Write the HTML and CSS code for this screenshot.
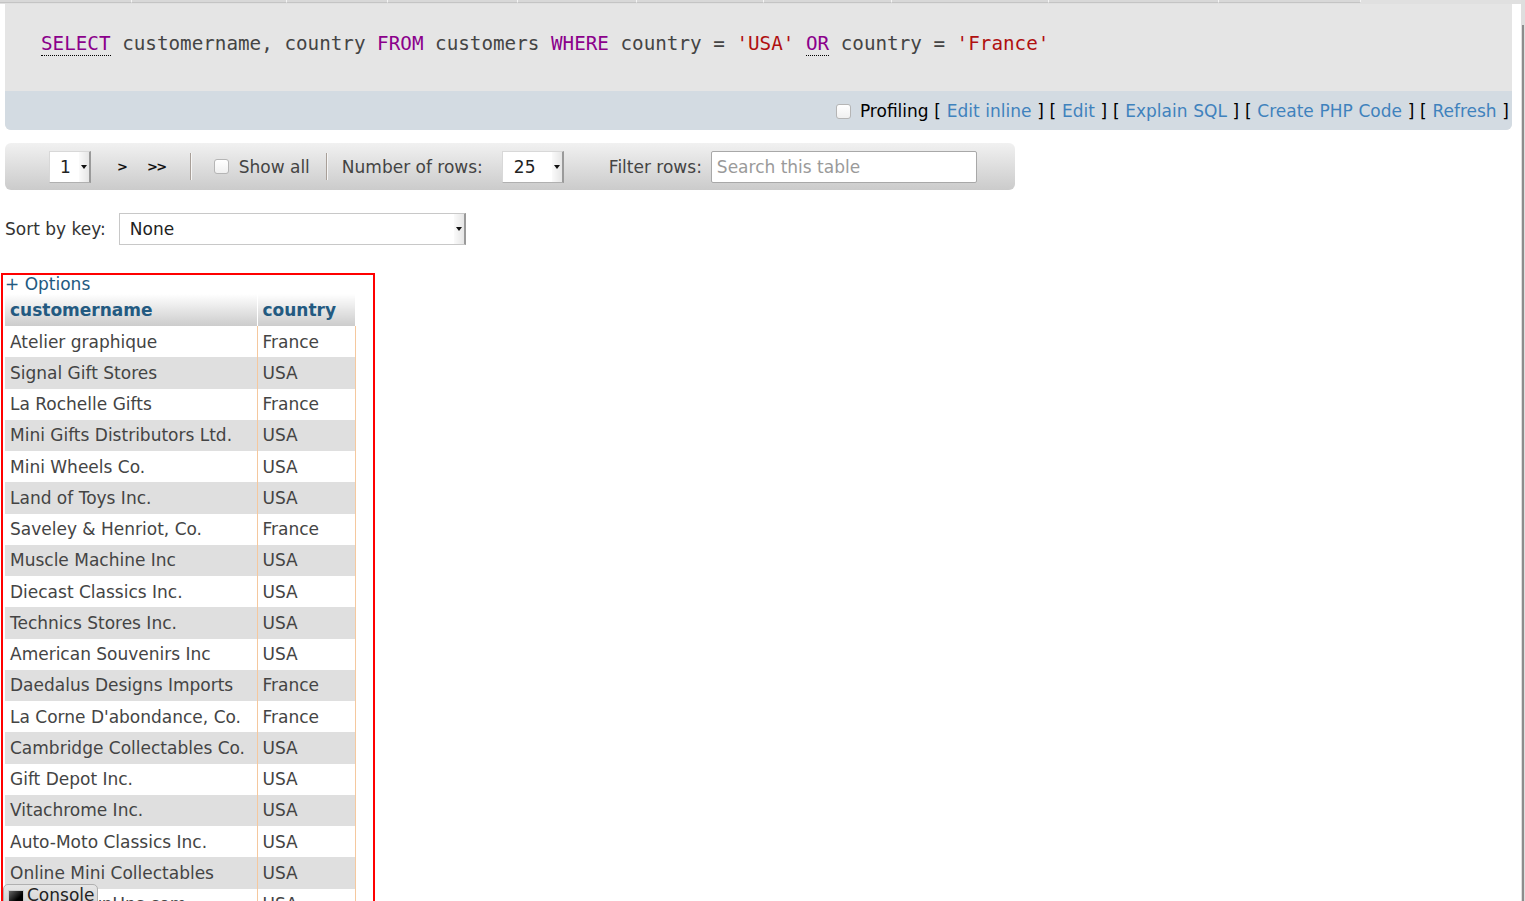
FILE: index.html
```html
<!DOCTYPE html>
<html>
<head>
<meta charset="utf-8">
<title>customers</title>
<link rel="stylesheet" href="styles.css">
</head>
<body>
<div class="tabs">
  <span class="tab t1"></span><span class="tab t2"></span><span class="tab t3"></span><span class="tab t4"></span><span class="tab t5"></span><span class="tab t6"></span><span class="tab t7"></span><span class="tab t8"></span><span class="tab t9"></span><span class="tab t10"></span>
</div>
<div class="scrollbar"><div class="thumb"></div></div>
<main class="page">
  <section class="sqlbox">
    <div class="sql"><code><abbr class="kw">SELECT</abbr> customername, country <span class="kw">FROM</span> customers <span class="kw">WHERE</span> country = <span class="str">'USA'</span> <abbr class="kw">OR</abbr> country = <span class="str">'France'</span></code></div>
    <div class="sqlactions">
      <span class="actions"><span class="cbox"></span>Profiling <span class="br">[</span> <a>Edit inline</a> <span class="br">]</span> <span class="br">[</span> <a>Edit</a> <span class="br">]</span> <span class="br">[</span> <a>Explain SQL</a> <span class="br">]</span> <span class="br">[</span> <a>Create PHP Code</a> <span class="br">]</span> <span class="br">[</span> <a>Refresh</a> <span class="br">]</span></span>
    </div>
  </section>

  <section class="navbar">
    <div class="sel sel-page"><span class="val">1</span><span class="arr"></span></div>
    <span class="navbtn next">&gt;</span>
    <span class="navbtn last">&gt;&gt;</span>
    <span class="sep sep1"></span>
    <label class="showall"><span class="cbox"></span>Show all</label>
    <span class="sep sep2"></span>
    <span class="lbl rows">Number of rows:</span>
    <div class="sel sel-rows"><span class="val">25</span><span class="arr"></span></div>
    <span class="lbl filter">Filter rows:</span>
    <div class="search">Search this table</div>
  </section>

  <section class="sortrow">
    <span class="lbl">Sort by key:</span>
    <div class="sel sel-sort"><span class="val">None</span><span class="arr"></span></div>
  </section>

  <section class="results">
    <a class="options">+ Options</a>
    <table class="data">
      <thead>
        <tr><th class="c1">customername</th><th class="c2">country</th></tr>
      </thead>
      <tbody>
        <tr><td>Atelier graphique</td><td>France</td></tr>
        <tr><td>Signal Gift Stores</td><td>USA</td></tr>
        <tr><td>La Rochelle Gifts</td><td>France</td></tr>
        <tr><td>Mini Gifts Distributors Ltd.</td><td>USA</td></tr>
        <tr><td>Mini Wheels Co.</td><td>USA</td></tr>
        <tr><td>Land of Toys Inc.</td><td>USA</td></tr>
        <tr><td>Saveley &amp; Henriot, Co.</td><td>France</td></tr>
        <tr><td>Muscle Machine Inc</td><td>USA</td></tr>
        <tr><td>Diecast Classics Inc.</td><td>USA</td></tr>
        <tr><td>Technics Stores Inc.</td><td>USA</td></tr>
        <tr><td>American Souvenirs Inc</td><td>USA</td></tr>
        <tr><td>Daedalus Designs Imports</td><td>France</td></tr>
        <tr><td>La Corne D'abondance, Co.</td><td>France</td></tr>
        <tr><td>Cambridge Collectables Co.</td><td>USA</td></tr>
        <tr><td>Gift Depot Inc.</td><td>USA</td></tr>
        <tr><td>Vitachrome Inc.</td><td>USA</td></tr>
        <tr><td>Auto-Moto Classics Inc.</td><td>USA</td></tr>
        <tr><td>Online Mini Collectables</td><td>USA</td></tr>
        <tr><td>Toys4GrownUps.com</td><td>USA</td></tr>
        <tr><td>Mini Caravy</td><td>France</td></tr>
      </tbody>
    </table>
  </section>
</main>
<div class="console"><span class="cicon"></span>Console</div>
</body>
</html>
```

FILE: styles.css
```css
html, body {
  margin: 0;
  padding: 0;
  height: 100%;
  overflow: hidden;
  background: #fff;
}
body {
  font-family: "DejaVu Sans", sans-serif;
  font-size: 17px;
  color: #444;
}

/* top tab strip (scrolled away) */
.tabs {
  display: flex;
  height: 4px;
  background: #e0e0e0;
}
.tab {
  display: block;
  height: 3px;
  background: #d8d8d8;
  border-bottom: 1px solid #c4c4c4;
  border-right: 1px solid #f4f4f4;
  box-sizing: border-box;
}
.t1 { width: 132px; }
.t2 { width: 155px; }
.t3 { width: 101px; }
.t4 { width: 130px; }
.t5 { width: 119px; }
.t6 { width: 127px; }
.t7 { width: 128px; }
.t8 { width: 157px; }
.t9 { width: 170px; }
.t10 { width: 142px; }

.scrollbar {
  position: absolute;
  top: 0;
  right: 0;
  width: 4px;
  height: 100%;
  background: #dedede;
}
.scrollbar .thumb {
  position: absolute;
  top: 25px;
  left: 1px;
  width: 2px;
  bottom: 0;
  background: #8c8c8c;
}

.page {
  padding: 0 0 0 5px;
}

/* SQL box */
.sqlbox {
  width: 1507px;
  border-radius: 0 0 6px 6px;
  overflow: hidden;
  background: #e5e5e5;
}
.sql {
  height: 87px;
  padding: 0 0 0 36px;
  display: flex;
  align-items: center;
  box-sizing: border-box;
}
.sql code {
  font-family: "DejaVu Sans Mono", monospace;
  font-size: 19.25px;
  color: #444;
  white-space: pre;
  position: relative;
  top: -4px;
}
.kw { color: #8b008b; }
.str { color: #b01010; }
abbr.kw {
  text-decoration: none;
  border-bottom: 1px dotted #000;
}
.sqlactions {
  height: 39px;
  background: #d3dbe2;
  display: flex;
  align-items: center;
  justify-content: flex-end;
  padding-right: 3px;
  color: #000;
}
.actions {
  white-space: nowrap;
  word-spacing: 0.3px;
}
.sqlactions a {
  color: #3f82bd;
  text-decoration: none;
}
.cbox {
  display: inline-block;
  width: 13px;
  height: 13px;
  border: 1px solid #b5b5b5;
  border-radius: 3px;
  background: linear-gradient(#ffffff, #f0f0f0);
  margin-right: 9px;
  vertical-align: -2px;
}

/* navigation bar */
.navbar {
  margin-top: 13px;
  width: 1010px;
  height: 47px;
  border-radius: 6px;
  background: linear-gradient(#f1f1f1, #cbcbcb);
  display: flex;
  align-items: center;
  box-sizing: border-box;
  padding-left: 44px;
}
.sel {
  position: relative;
  display: flex;
  align-items: center;
  height: 32px;
  box-sizing: border-box;
  background: #fff;
  border: 1px solid #d8d8d8;
  border-right: 2px solid #9a9a9a;
  border-bottom-color: #b0b0b0;
  color: #222;
}
.sel .val { padding-left: 10px; }
.sel .arr {
  position: absolute;
  right: 0;
  top: 0;
  bottom: 0;
  width: 10px;
  background: linear-gradient(90deg, #fafafa, #e6e6e6);
}
.sel .arr::after {
  content: "";
  position: absolute;
  left: 2px;
  top: 13px;
  border-left: 3px solid transparent;
  border-right: 3px solid transparent;
  border-top: 4px solid #111;
}
.sel-page { width: 42px; }
.sel-rows { width: 62px; }
.sel-rows .val { padding-left: 11px; }
.sel-sort { width: 347px; height: 32px; }

.navbtn {
  font-size: 13px;
  font-weight: bold;
  color: #111;
  font-family: "DejaVu Sans", sans-serif;
}
.next { margin-left: 26px; }
.last { margin-left: 19px; letter-spacing: -1.5px; }
.sep {
  width: 1px;
  height: 27px;
  background: #a89f98;
  border-right: 1px solid #f6f6f6;
}
.sep1 { margin-left: 24px; }
.showall {
  display: flex;
  align-items: center;
  margin-left: 22px;
  margin-right: 16px;
}
.showall .cbox { margin-right: 10px; vertical-align: 0; }
.navbar .rows { margin-left: 14px; margin-right: 19px; }
.navbar .filter { margin-left: 45px; margin-right: 9px; }
.search {
  width: 266px;
  height: 32px;
  box-sizing: border-box;
  border: 1px solid #a8a8a8;
  border-radius: 2px;
  background: #fff;
  color: #9a9a9a;
  padding-left: 5px;
  display: flex;
  align-items: center;
}

/* sort row */
.sortrow {
  margin-top: 23px;
  display: flex;
  align-items: center;
  color: #333;
}
.sortrow .lbl { margin-right: 13px; }
.sortrow .sel { border-color: #c8c8c8; border-right: 2px solid #9a9a9a; }

/* results */
.results {
  margin: 28px 0 0 -4px;
  width: 368px;
  border: 2px solid #f00;
  border-bottom: none;
  padding: 0 0 0 2px;
  height: 700px;
}
.options {
  display: block;
  color: #235a81;
  line-height: 19px;
}
.data {
  border-collapse: collapse;
}
.data th {
  text-align: left;
  color: #235a81;
  font-weight: bold;
  background: linear-gradient(#ffffff, #cccccc);
  height: 32px;
  padding: 0 5px;
  box-sizing: border-box;
  border-right: 1px solid #fff;
}
.data .c1 { width: 252px; }
.data .c2 { width: 98px; }
.data td {
  height: 31.25px;
  padding: 0 5px;
  box-sizing: border-box;
  color: #444;
  border-right: 1px solid #f5c89e;
  white-space: nowrap;
}
.data tbody tr:nth-child(odd) td { background: #fff; }
.data tbody tr:nth-child(even) td { background: #dfdfdf; }

/* console */
.console {
  position: absolute;
  left: 3px;
  top: 884px;
  width: 95px;
  height: 24px;
  box-sizing: border-box;
  background: linear-gradient(#e6e6e6, #d2d2d2);
  border: 1px solid #b0b0b0;
  border-radius: 5px 5px 0 0;
  display: flex;
  align-items: flex-start;
  color: #222;
  line-height: 20px;
}
.cicon {
  display: inline-block;
  width: 14px;
  height: 14px;
  margin: 5px 3px 0 4px;
  background: linear-gradient(135deg, #666, #000 60%);
  border: 1px solid #ccc;
}
```
